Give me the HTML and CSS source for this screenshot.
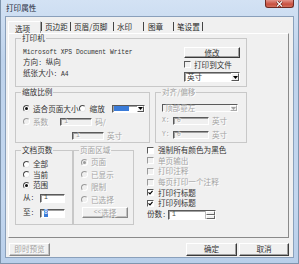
FILE: index.html
```html
<!DOCTYPE html>
<html>
<head>
<meta charset="utf-8">
<link rel="stylesheet" href="styles.css">
</head>
<body>
<div class="window">
  <div class="titlebar">
    <span class="title">打印属性</span>
    <span class="close"><svg width="9" height="6" viewBox="0 0 9 6"><path d="M2 0.5 L7 5.5 M7 0.5 L2 5.5" stroke="#5a1a12" stroke-width="2.4"/><path d="M2 0.5 L7 5.5 M7 0.5 L2 5.5" stroke="#fff" stroke-width="1.2"/></svg></span>
  </div>
  <div class="client">
    <div class="tabs">
      <span class="tab active t1">选项</span>
      <span class="tab t2">页边距</span>
      <span class="tab t3">页眉/页脚</span>
      <span class="tab t4">水印</span>
      <span class="tab t5">图章</span>
      <span class="tab t6">笔设置</span>
    </div>
    <div class="panel">
      <fieldset class="group g-printer">
        <legend>打印机</legend>
        <div class="printer-row">
          <div class="printer-info">
            <div><span class="a">Microsoft XPS Document Writer</span></div>
            <div>方向<span class="a">: </span>纵向</div>
            <div>纸张大小<span class="a">: A4</span></div>
          </div>
          <div class="printer-ctrl">
            <div class="btn btn-modify">修改</div>
            <div class="check chk-file"><span class="cb"></span><span>打印到文件</span></div>
            <div class="select sel-unit"><span class="sel-text">英寸</span><span class="sel-arrow"><svg width="5" height="3" viewBox="0 0 5 3"><path d="M0 0 H5 L2.5 3 Z" fill="#000"/></svg></span></div>
          </div>
        </div>
      </fieldset>

      <div class="row2">
        <fieldset class="group g-scale">
          <legend>缩放比例</legend>
          <div class="scale-r1">
            <span class="radio on"></span><span class="lbl-fit">适合页面大小</span>
            <span class="radio"></span><span class="lbl-zoom">缩放</span>
            <div class="select sel-zoom"><span class="sel-hl"></span><span class="sel-arrow"><svg width="5" height="3" viewBox="0 0 5 3"><path d="M0 0 H5 L2.5 3 Z" fill="#000"/></svg></span></div>
          </div>
          <div class="scale-r2 dis">
            <span class="radio"></span><span class="lbl-coef">系数</span>
            <div class="input in-scale"><span class="a">1</span></div><span class="unit">码/</span>
          </div>
          <div class="scale-r3 dis">
            <div class="input in-scale"><span class="a">1</span></div><span class="unit">英寸</span>
          </div>
        </fieldset>
        <fieldset class="group g-align dis">
          <legend>对齐/偏移</legend>
          <div class="select sel-align"><span class="sel-text">顶部靠左</span><span class="sel-arrow"><svg width="5" height="3" viewBox="0 0 5 3"><path d="M0 0 H5 L2.5 3 Z" fill="#a0a0a0"/></svg></span></div>
          <div class="off-row off-x"><span class="a xy">X:</span><div class="input in-off"><span class="a">0</span></div><span class="unit">英寸</span></div>
          <div class="off-row off-y"><span class="a xy">Y:</span><div class="input in-off"><span class="a">0</span></div><span class="unit">英寸</span></div>
        </fieldset>
      </div>

      <div class="row3">
        <fieldset class="group g-pages">
          <legend>文档页数</legend>
          <div class="opt"><span class="radio"></span><span>全部</span></div>
          <div class="opt"><span class="radio"></span><span>当前</span></div>
          <div class="opt"><span class="radio on"></span><span>范围</span></div>
          <div class="range r-from"><span class="rl">从<span class="a">:</span></span><div class="input in-range"><span class="a">1</span></div></div>
          <div class="range r-to"><span class="rl">至<span class="a">:</span></span><div class="input in-range"><span class="a sel">8</span></div></div>
        </fieldset>
        <fieldset class="group g-area dis">
          <legend>页面区域</legend>
          <div class="opt"><span class="radio on"></span><span>页面</span></div>
          <div class="opt"><span class="radio"></span><span>已显示</span></div>
          <div class="opt"><span class="radio"></span><span>限制</span></div>
          <div class="opt"><span class="radio"></span><span>已选择</span></div>
          <div class="btn btn-choose"><span class="a">&lt;&lt; </span>选择</div>
        </fieldset>
        <div class="checks">
          <div class="check"><span class="cb"></span><span>强制所有颜色为黑色</span></div>
          <div class="check dis"><span class="cb"></span><span>单页输出</span></div>
          <div class="check dis"><span class="cb"></span><span>打印注释</span></div>
          <div class="check dis"><span class="cb"></span><span>每页打印一个注释</span></div>
          <div class="check"><span class="cb on"><svg width="5" height="5" viewBox="0 0 5 5"><path d="M0.5 2.3 L2 3.8 L4.6 0.8" stroke="#000" stroke-width="1.2" fill="none"/></svg></span><span>打印行标题</span></div>
          <div class="check"><span class="cb on"><svg width="5" height="5" viewBox="0 0 5 5"><path d="M0.5 2.3 L2 3.8 L4.6 0.8" stroke="#000" stroke-width="1.2" fill="none"/></svg></span><span>打印列标题</span></div>
          <div class="copies"><span>份数<span class="a">:</span></span><div class="input in-copies"><span class="a">1</span><span class="spin"><span class="sp"></span><span class="sp"></span></span></div></div>
        </div>
      </div>
    </div>
    <div class="footer">
      <div class="btn btn-preview dis">即时预览</div>
      <div class="btn btn-ok">确定</div>
      <div class="btn btn-cancel">取消</div>
    </div>
  </div>
</div>
</body>
</html>
```

FILE: styles.css
```css
* { box-sizing: border-box; }
html, body { margin: 0; padding: 0; }
body {
  width: 299px; height: 264px; overflow: hidden;
  font-family: "Noto Sans CJK SC", "Noto Sans", sans-serif;
  font-size: 7.6px; line-height: 8px; color: #333; background: #c6d9f0;
}
.a { font-family: "Liberation Mono", monospace; font-size: 6.3px; }

.window {
  width: 299px; height: 264px;
  background: linear-gradient(#d3e2f4, #bed3ec 60px, #c3d7ef 200px, #b9cfea);
  display: flex; flex-direction: column;
  padding: 0 4px 5px 4px;
  border-left: 1px solid #7f95ae; border-right: 1px solid #7f95ae; border-bottom: 1px solid #7f95ae;
}
.titlebar { height: 16px; display: flex; align-items: flex-start; }
.title { margin-top: 4px; margin-left: 1px; color: #1b2838; }
.close {
  margin-left: auto; margin-right: 0; width: 29px; height: 8px;
  background: linear-gradient(#e2938a, #c8503f 60%, #d2705d);
  border: 1px solid #6e2a22; border-top: none; border-radius: 0 0 3px 3px;
  display: flex; align-items: center; justify-content: center;
}

.client {
  flex: 1; background: #f0f0f0;
  border: 1px solid #8aa0bb;
  display: flex; flex-direction: column;
  padding: 3px 4px 0 2px;
}

/* tabs */
.tabs { height: 13px; display: flex; align-items: flex-end; }
.tab { height: 12px; padding-top: 2px; white-space: nowrap; color: #2a2a2a; }
.tab:not(.active)::before {
  content: ""; display: inline-block; width: 1px; height: 9px; background: #444;
  vertical-align: top; margin-top: -1px;
}
.t1 { width: 33px; padding-left: 6px; height: 13px; padding-top: 3px;
  border-top: 1px solid #fff; border-left: 1px solid #fff; border-right: 1px solid #a0a0a0; background: #f0f0f0; margin-bottom: -1px; }
.t2 { width: 29px; }
.t2::before { margin-right: 3px; }
.t3 { width: 43px; }
.t3::before { margin-right: 3px; }
.t4 { width: 30px; }
.t4::before { margin-right: 3px; }
.t5 { width: 30px; }
.t5::before { margin-right: 4px; }
.t6 { width: 32px; }
.t6::before { margin-right: 3px; }
.t6::after { content: ""; display: inline-block; width: 1px; height: 9px; background: #444; vertical-align: top; margin-top: -1px; margin-left: 2px; }

.panel {
  height: 205px;
  border: 1px solid; border-color: #fff #8a8a8a #8a8a8a #fff;
  padding: 0 0 0 6px;
  display: flex; flex-direction: column;
}

/* group boxes */
fieldset.group {
  margin: 0; padding: 0; min-width: 0;
  border: 1px solid #c8c8c8;
}
fieldset.group legend {
  padding: 0 1px; margin-left: 5px; line-height: 8px; height: 8px;
}
.dis, .dis legend { color: #a3a3a3; }

.g-printer { width: 232px; height: 53px; }
.printer-row { display: flex; padding: 4px 6px 0 7px; }
.printer-info { line-height: 9px; color: #333; }
.printer-ctrl { margin-left: auto; width: 56px; display: flex; flex-direction: column; margin-top: 1px; }
.btn {
  border: 1px solid; border-color: #fff #3a3a3a #3a3a3a #fff;
  box-shadow: inset -1px -1px 0 #a0a0a0;
  background: #f0f0f0; text-align: center; display: flex; align-items: center; justify-content: center;
}
.btn-modify { height: 11px; }
.check { display: flex; align-items: center; height: 10px; white-space: nowrap; }
.cb {
  width: 7px; height: 7px; flex: none; background: #fff;
  border: 1px solid; border-color: #5a5a5a #fff #fff #5a5a5a;
  display: flex; align-items: center; justify-content: center; margin-right: 4px;
}
.chk-file { margin-top: 1px; height: 11px; }
.chk-file .cb { margin-right: 3px; background: #f0f0f0; }
.select {
  height: 10px; background: #fff; display: flex; align-items: center;
  border: 1px solid; border-color: #5a5a5a #fff #fff #5a5a5a;
  box-shadow: inset 1px 1px 0 #a0a0a0;
}
.sel-unit { margin-top: 2px; }
.sel-text { padding-left: 2px; flex: 1; }
.sel-arrow {
  width: 8px; height: 8px; flex: none; margin-left: auto; margin-right: 0;
  border: 1px solid; border-color: #fff #555 #555 #fff; background: #f0f0f0;
  display: flex; align-items: center; justify-content: center;
}

/* row 2 */
.row2 { display: flex; gap: 5px; margin-top: 1px; }
.g-scale { width: 135px; height: 55px; }
.g-align { width: 92px; height: 55px; }
.radio {
  width: 7px; height: 7px; flex: none; border-radius: 50%; background: #fff;
  border: 1px solid; border-color: #4a4a4a #e8e8e8 #e8e8e8 #4a4a4a;
  display: inline-flex; align-items: center; justify-content: center;
}
.radio.on::after { content: ""; width: 3px; height: 3px; border-radius: 50%; background: #111; }
.dis .radio { background: #f0f0f0; border-color: #9a9a9a #fff #fff #9a9a9a; }
.dis .radio.on::after { background: #9a9a9a; }
.dis .cb { background: #f0f0f0; border-color: #9a9a9a #fff #fff #9a9a9a; }
.dis { text-shadow: 1px 1px 0 #fff; }

.scale-r1 { display: flex; align-items: center; margin-top: 8px; padding-left: 7px; height: 9px; }
.lbl-fit { margin-left: 3px; }
.lbl-zoom { margin-left: 4px; }
.sel-zoom { width: 33px; height: 8px; margin-left: 7px; }
.sel-hl { width: 15px; height: 5px; background: #3a7bd8; margin-left: 1px; }
.sel-zoom .sel-arrow { width: 7px; height: 6px; }
.scale-r2 { display: flex; align-items: center; padding-left: 7px; margin-top: 4px; height: 9px; }
.lbl-coef { margin-left: 3px; }
.input {
  background: #fff; height: 8px; display: flex; align-items: center;
  border: 1px solid; border-color: #5a5a5a #fff #fff #5a5a5a;
  box-shadow: inset 1px 1px 0 #a0a0a0; padding-left: 3px; color: #444;
}
.dis .input { background: #f0f0f0; color: #a0a0a0; }
.in-scale { width: 32px; margin-left: 12px; }
.unit { margin-left: 3px; }
.scale-r3 { display: flex; align-items: center; padding-left: 44px; margin-top: 5px; height: 9px; }

.sel-align { width: 76px; height: 8px; margin: 8px 0 0 6px; background: #f0f0f0; box-shadow: none; }
.sel-align .sel-arrow { width: 7px; height: 6px; border-color: #fff #aaa #aaa #fff; }
.off-row { display: flex; align-items: center; padding-left: 6px; height: 9px; }
.off-x { margin-top: 4px; }
.off-y { margin-top: 5px; }
.xy { width: 11px; }
.in-off { width: 36px; }

/* row 3 */
.row3 { display: flex; margin-top: 3px; }
.g-pages { width: 58px; height: 79px; }
.g-area { width: 61px; height: 79px; margin-left: 5px; }
.opt { display: flex; align-items: center; height: 10px; padding-left: 7px; }
.opt .radio { margin-right: 3px; }
.g-pages .opt:first-of-type { margin-top: 5px; }
.g-pages .opt { height: 10.5px; }
.range { display: flex; align-items: center; padding-left: 7px; height: 9px; }
.r-from { margin-top: 3px; }
.r-to { margin-top: 6px; }
.rl { width: 17px; }
.in-range { width: 25px; height: 9px; }
.sel { background: #3a7bd8; color: #fff; }
.g-area .opt { padding-left: 7px; height: 12.5px; }
.g-area .opt:first-of-type { margin-top: 2px; }
.btn-choose { width: 46px; height: 11px; margin: 1px 0 0 8px; border-color: #fff #888 #888 #fff; box-shadow: inset -1px -1px 0 #c0c0c0; }

.checks { margin-left: 13px; margin-top: -1px; display: flex; flex-direction: column; }
.checks .check { height: 10.6px; }
.cb.on { background: #fff; }
.copies { display: flex; align-items: center; height: 11px; margin-top: 1px; }
.in-copies { width: 48px; height: 10px; margin-left: 2px; padding-right: 0; }
.spin { margin-left: auto; width: 10px; height: 8px; display: flex; flex-direction: column; border-left: 1px solid #bbb; }
.sp { flex: 1; border: 1px solid; border-color: #fff #666 #666 #fff; background: #f0f0f0; }

/* footer */
.footer { display: flex; align-items: center; margin-top: 4px; height: 14px; padding-left: 1px; }
.btn-preview { width: 41px; height: 13px; color: #a3a3a3; border-color: #fff #888 #888 #fff; box-shadow: inset -1px -1px 0 #c0c0c0; }
.btn-ok { width: 51px; height: 13px; margin-left: auto; }
.btn-cancel { width: 50px; height: 13px; margin-left: 2px; }
```
